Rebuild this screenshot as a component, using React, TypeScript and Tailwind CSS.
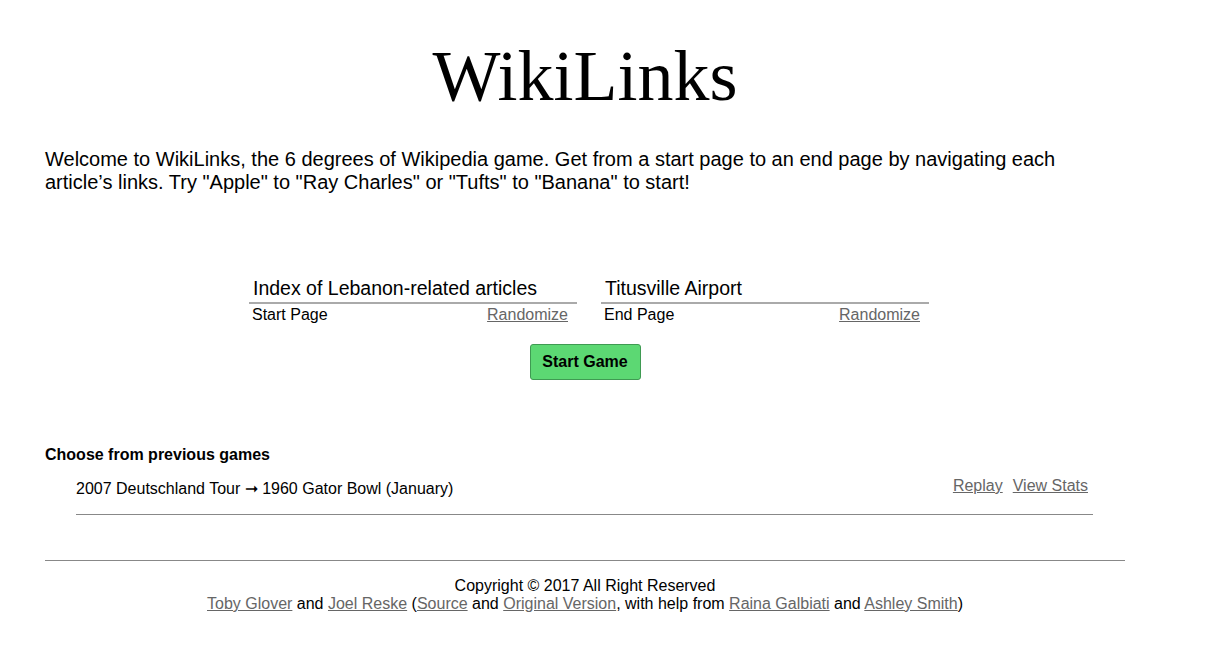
export default function App() {
  return (
    <div className="min-h-[651px] bg-white font-['Liberation_Sans',Arial,sans-serif] text-black">
      <div className="ml-[45px] w-[1080px]">
        <h1 className="pt-[35px] text-center font-['Liberation_Serif','Times_New_Roman',serif] text-[72px] leading-[82px]">
          WikiLinks
        </h1>

        <p className="mt-[31px] text-[20px] leading-[23px]">
          Welcome to WikiLinks, the 6 degrees of Wikipedia game. Get from a start page to an end page by navigating each
          article’s links. Try "Apple" to "Ray Charles" or "Tufts" to "Banana" to start!
        </p>

        <div className="mt-[80px] flex justify-center gap-[24px] pl-[8px]">
          <div className="w-[328px]">
            <div className="border-b-2 border-[#aaa] pl-[4px] text-[19.5px] leading-[28px]">
              Index of Lebanon-related articles
            </div>
            <div className="flex justify-between px-[3px] pr-[9px] text-[16px] leading-[22px]">
              <span>Start Page</span>
              <a href="#" className="text-[#666] underline">Randomize</a>
            </div>
          </div>
          <div className="w-[328px]">
            <div className="border-b-2 border-[#aaa] pl-[4px] text-[19.5px] leading-[28px]">
              Titusville Airport
            </div>
            <div className="flex justify-between px-[3px] pr-[9px] text-[16px] leading-[22px]">
              <span>End Page</span>
              <a href="#" className="text-[#666] underline">Randomize</a>
            </div>
          </div>
        </div>

        <div className="mt-[18px] flex justify-center">
          <button className="h-[36px] w-[111px] rounded-[3px] border border-[#3f9a52] bg-[#5cd873] text-[16px] font-bold">
            Start Game
          </button>
        </div>

        <h2 className="mt-[65px] text-[16px] font-bold leading-[20px]">Choose from previous games</h2>

        <div className="ml-[31px] mr-[32px] mt-[12px] border-b border-[#888] pb-[16px]">
          <div className="flex items-start justify-between">
            <span className="mt-[3px] text-[16px] leading-[18px]">
              2007 Deutschland Tour ➞ 1960 Gator Bowl (January)
            </span>
            <div className="mr-[5px] flex gap-[10px] text-[16px] leading-[18px]">
              <a href="#" className="text-[#666] underline">Replay</a>
              <a href="#" className="text-[#666] underline">View Stats</a>
            </div>
          </div>
        </div>

        <div className="mt-[45px] border-t border-[#888] pt-[16px] text-center text-[16px] leading-[18px]">
          <div>Copyright © 2017 All Right Reserved</div>
          <div>
            <a href="#" className="text-[#666] underline">Toby Glover</a> and{" "}
            <a href="#" className="text-[#666] underline">Joel Reske</a> (
            <a href="#" className="text-[#666] underline">Source</a> and{" "}
            <a href="#" className="text-[#666] underline">Original Version</a>, with help from{" "}
            <a href="#" className="text-[#666] underline">Raina Galbiati</a> and{" "}
            <a href="#" className="text-[#666] underline">Ashley Smith</a>)
          </div>
        </div>
      </div>
    </div>
  );
}
